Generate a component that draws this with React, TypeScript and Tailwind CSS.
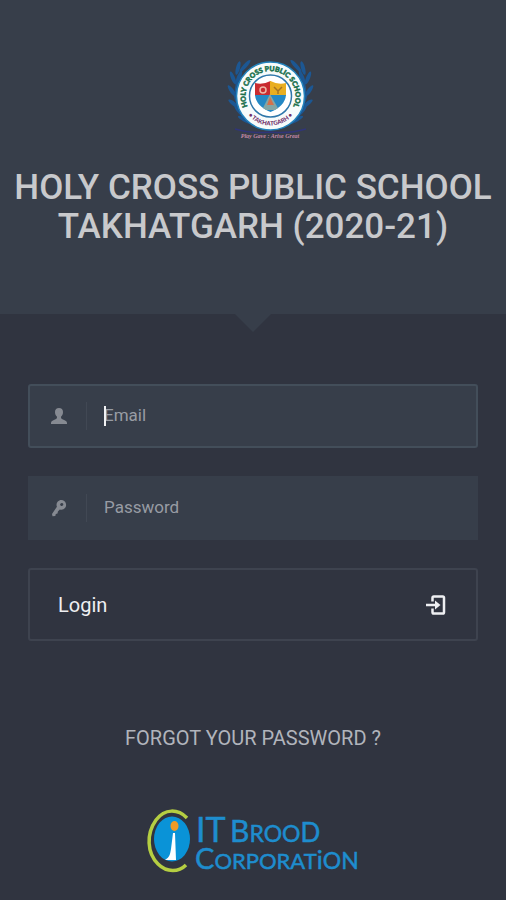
import { useState } from "react";

function SchoolCrest() {
  return (
    <svg viewBox="0 0 90 90" className="w-[90px] h-[90px]" role="img" aria-label="Holy Cross Public School">
      <defs>
        <path id="crest-top" d="M22.500 54 A25 25 0 1 1 66.500 54" />
        <path id="crest-bottom" d="M19.500 57.600 A29.500 29.500 0 0 0 69.500 57.600" />
        <clipPath id="shield">
          <path d="M29 29 Q37 31 44.500 27 Q52 31 60 29 V41 Q59 52 44.500 58 Q30 52 29 41 Z" />
        </clipPath>
      </defs>
      {/* laurel branches */}
      <g fill="#1c5793">
        {[false, true].map((flip) => (
          <g key={String(flip)} transform={flip ? "translate(89 0) scale(-1 1)" : undefined}>
            <ellipse cx="19" cy="12" rx="8" ry="2" transform="rotate(-48 19 12)" />
            <ellipse cx="12" cy="14" rx="7" ry="2" transform="rotate(-75 12 14)" />
            <ellipse cx="13" cy="23" rx="7" ry="2" transform="rotate(-68 13 23)" />
            <ellipse cx="7" cy="24" rx="7" ry="2" transform="rotate(68 7 24)" />
            <ellipse cx="11" cy="34" rx="7" ry="2" transform="rotate(-82 11 34)" />
            <ellipse cx="6" cy="37" rx="7" ry="2" transform="rotate(55 6 37)" />
            <ellipse cx="11" cy="46" rx="7" ry="2" transform="rotate(70 11 46)" />
            <ellipse cx="8" cy="50" rx="7" ry="2" transform="rotate(38 8 50)" />
            <ellipse cx="14" cy="58" rx="8" ry="2" transform="rotate(48 14 58)" />
            <ellipse cx="19" cy="66" rx="8" ry="2" transform="rotate(28 19 66)" />
          </g>
        ))}
      </g>
      <circle cx="44.500" cy="42" r="34" fill="#f7fbfb" stroke="#2383bd" strokeWidth="1.500" />
      <circle cx="44.500" cy="42" r="21" fill="#fff" stroke="#2f77aa" strokeWidth="1.500" />
      <g clipPath="url(#shield)">
        <rect x="27" y="24" width="18" height="18" fill="#c92b30" />
        <rect x="44" y="24" width="18" height="18" fill="#e9ae20" />
        <rect x="27" y="41" width="36" height="20" fill="#2588c4" />
        <path d="M44 40 L53 56 H36 Z" fill="#83a6a5" />
        <path d="M44 43 L48 51 H41 Z" fill="#d3714b" />
      </g>
      <circle cx="37" cy="36" r="3" fill="none" stroke="#efb7a7" strokeWidth="1.500" />
      <path d="M48 33 L52 37 L56 33 M52 37 V40" fill="none" stroke="#a67424" strokeWidth="1.500" />
      <text fill="#19704c" stroke="#19704c" strokeWidth="0.500" fontSize="7" fontWeight="900" fontFamily="Lato, sans-serif">
        <textPath href="#crest-top" startOffset="50%" textAnchor="middle">HOLY CROSS PUBLIC SCHOOL</textPath>
      </text>
      <text fill="#71306b" fontSize="6" fontWeight="900" fontFamily="Lato, sans-serif">
        <textPath href="#crest-bottom" startOffset="50%" textAnchor="middle">• TAKHATGARH •</textPath>
      </text>
      <path d="M9 75 Q25 80 44 78 Q63 80 80 75" fill="none" stroke="#303579" strokeWidth="1.500" />
      <text x="44" y="84" textAnchor="middle" fill="#c68ba9" fontSize="6" fontWeight="700" fontStyle="italic" fontFamily="Liberation Serif, serif">
        Play Gave : Arise Great
      </text>
    </svg>
  );
}

function BroodLogo() {
  return (
    <svg viewBox="0 0 216 70" className="w-[216px] h-[70px]" role="img" aria-label="IT Brood Corporation">
      <path d="M42 12 C33 3 20 2 11 14 C1 28 2 47 13 58 C22 67 34 66 41 59" fill="none" stroke="#b5ce42" strokeWidth="3.500" />
      <ellipse cx="27" cy="33" rx="18" ry="22.500" fill="#0a93d7" />
      <ellipse cx="29.500" cy="20" rx="4" ry="5" fill="#ee9b25" />
      <path d="M28 27 H30 L31 54 H20 C25 51 25 48 26 43 Z" fill="#fff" />
      <g fill="#1e8dce" stroke="#1e8dce" strokeWidth="0.500" fontFamily="Lato, sans-serif">
        <text x="51" y="36" fontSize="34">IT</text>
        <text x="85" y="36" fontSize="30">
          B<tspan fontSize="23">ROO</tspan>
          <tspan fontSize="26">D</tspan>
        </text>
        <text x="50" y="63" fontSize="29">
          C<tspan fontSize="22">ORPORAT</tspan>
          <tspan fontSize="25">i</tspan>
          <tspan fontSize="23">ON</tspan>
        </text>
      </g>
    </svg>
  );
}

function UserIcon() {
  return (
    <svg viewBox="0 0 18 18" className="w-[18px] h-[18px]" fill="currentColor" aria-hidden="true">
      <path d="M9 1C6.500 1 5 2.500 5 5c0 2 .7 3.500 2 4.700 0 1.600-.3 2.100-2 2.800C2.700 13.500 1 14 1 16v1h16v-1c0-2-1.700-2.500-4-3.500-1.700-.7-2-1.200-2-2.800C12.300 8.500 13 7 13 5c0-2.500-1.500-4-4-4Z" />
    </svg>
  );
}

function KeyIcon() {
  return (
    <svg viewBox="0 0 18 18" className="w-[18px] h-[18px]" fill="currentColor" aria-hidden="true">
      <path
        fillRule="evenodd"
        d="M14.500 2.200C12.500.3 9.500.5 7.800 2.500 6.400 4 6.200 6 6.900 7.700L2 15l.5 2.300 2.800-.4.5-2 1.700-.4.4-2 1.900-2.100c2 .7 4.100.1 5.400-1.600 1.500-2 1.100-4.900-.7-6.600ZM13 6.300a1.500 1.500 0 1 1-2.300-1.900A1.500 1.500 0 0 1 13 6.300Z"
      />
    </svg>
  );
}

function LoginIcon() {
  return (
    <svg viewBox="0 0 20 20" className="w-5 h-5" fill="none" stroke="currentColor" strokeWidth="2.500" aria-hidden="true">
      <path d="M6.500 6.500V2.800c0-.8.400-1.300 1.300-1.300h9c.8 0 1.200.5 1.200 1.300v14.400c0 .8-.4 1.300-1.200 1.300h-9c-.9 0-1.300-.5-1.300-1.300v-3.700" />
      <path d="M0 10h10" />
      <path d="M9 5.500l5.500 4.500L9 14.500Z" fill="currentColor" stroke="none" />
    </svg>
  );
}

export default function App() {
  const [email, setEmail] = useState("");
  const [password, setPassword] = useState("");

  return (
    <div className="min-h-screen bg-[#303440] font-[Roboto,sans-serif]">
      <header className="relative bg-[#373e4a] px-3 pt-[54px] pb-[68px] flex flex-col items-center">
        <div className="pl-9">
          <SchoolCrest />
        </div>
        <h1 className="mt-6 text-center text-[35px] leading-[39px] font-medium text-[#c8c9cc]">
          HOLY CROSS PUBLIC SCHOOL TAKHATGARH (2020-21)
        </h1>
        <svg viewBox="0 0 36 18" className="absolute top-full left-1/2 -translate-x-1/2 w-9 h-[18px]" aria-hidden="true">
          <path d="M0 0h36L18 18Z" fill="#373e4a" />
        </svg>
      </header>

      <main className="px-7 pt-[70px] flex flex-col items-center">
        <form className="w-full flex flex-col gap-7" onSubmit={(e) => e.preventDefault()}>
          <div className="flex items-center h-16 rounded-[3px] border-2 border-[#434e5a] bg-[#373e4a] pl-5">
            <label htmlFor="email" aria-label="Email" className="w-9 text-[#868a92]">
              <UserIcon />
            </label>
            <div className="relative flex-1 border-l border-[#414854] h-7 flex items-center">
              {email === "" && <span className="absolute left-[17px] w-0.5 h-5 bg-[#f1f2f4]" />}
              <input
                id="email"
                type="email"
                value={email}
                onChange={(e) => setEmail(e.target.value)}
                placeholder="Email"
                className="w-full bg-transparent pl-[17px] text-[17px] text-white placeholder:text-[#989ca4] outline-none"
              />
            </div>
          </div>

          <div className="flex items-center h-16 border-2 border-[#373e4a] bg-[#373e4a] pl-5">
            <label htmlFor="password" aria-label="Password" className="w-9 text-[#868a92]">
              <KeyIcon />
            </label>
            <div className="flex-1 border-l border-[#414854] h-7 flex items-center">
              <input
                id="password"
                type="password"
                value={password}
                onChange={(e) => setPassword(e.target.value)}
                placeholder="Password"
                className="w-full bg-transparent pl-[17px] text-[17px] text-white placeholder:text-[#989ca4] outline-none"
              />
            </div>
          </div>

          <button type="submit" className="flex items-center justify-between h-[73px] rounded-[3px] border-2 border-[#3e434f] pl-7 pr-[30px] text-xl text-[#eeeff2]">
            Login
            <LoginIcon />
          </button>
        </form>

        <a href="#forgot" className="mt-[83px] text-xl leading-7 text-[#b1b4bc]">
          FORGOT YOUR PASSWORD ?
        </a>
        <div className="mt-[54px]">
          <BroodLogo />
        </div>
      </main>
    </div>
  );
}
